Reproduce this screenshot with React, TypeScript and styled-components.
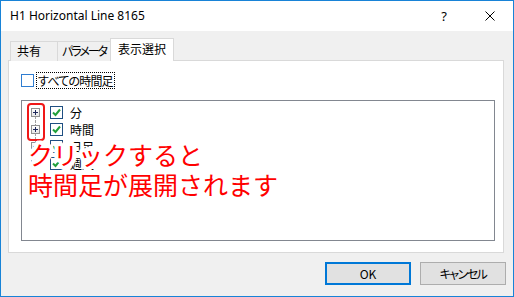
import React from "react";
import styled, { createGlobalStyle } from "styled-components";

const Global = createGlobalStyle`
  html, body { margin: 0; padding: 0; background: #fff; }
  body { font-family: "Noto Sans CJK JP", "Noto Sans", sans-serif; }
`;

const UI_FONT = `"Noto Sans CJK JP", "Noto Sans", sans-serif`;

const HALO = (() => {
  const parts: string[] = [];
  for (const r of [2, 4]) {
    for (let a = 0; a < 16; a++) {
      const t = (a / 16) * Math.PI * 2;
      parts.push(`${(Math.cos(t) * r).toFixed(2)}px ${(Math.sin(t) * r).toFixed(2)}px 0 #fff`);
    }
  }
  return parts.join(", ");
})();

const Window = styled.div`
  width: 514px;
  height: 297px;
  box-sizing: border-box;
  border: 1px solid #1883d7;
  background: #f0f0f0;
  display: flex;
  flex-direction: column;
`;

const TitleBar = styled.div`
  height: 30px;
  flex: none;
  background: #fff;
  display: flex;
  align-items: center;
  padding-left: 9px;
`;

const TitleText = styled.div`
  flex: 1;
  font-family: "Noto Sans", sans-serif;
  font-size: 12px;
  color: #000;
  line-height: 16px;
`;

const CaptionButton = styled.div`
  width: 46px;
  height: 30px;
  display: flex;
  align-items: center;
  justify-content: center;
  font-family: "Noto Sans", sans-serif;
  font-size: 13px;
  color: #000;
`;

const Body = styled.div`
  flex: 1;
  display: flex;
  flex-direction: column;
  padding: 8px 9px 0 7px;
`;

const TabStrip = styled.div`
  height: 22px;
  display: flex;
  align-items: flex-end;
  padding-left: 2px;
  position: relative;
  z-index: 1;
  margin-bottom: -1px;
`;

const Tab = styled.div<{ $selected?: boolean; $width: number; $pad: number; $squeeze?: number }>`
  box-sizing: border-box;
  width: ${(p) => p.$width}px;
  height: ${(p) => (p.$selected ? 23 : 20)}px;
  margin-left: -1px;
  &:first-child { margin-left: 0; }
  border: 1px solid #d9d9d9;
  border-bottom: none;
  background: ${(p) => (p.$selected ? "#fff" : "#f0f0f0")};
  padding-left: ${(p) => p.$pad}px;
  padding-top: ${(p) => (p.$selected ? 2 : 1)}px;
  font-family: ${UI_FONT};
  font-feature-settings: "palt";
  font-size: 12px;
  letter-spacing: ${(p) => p.$squeeze ?? 0}px;
  line-height: 16px;
  color: #000;
  white-space: nowrap;
  overflow: hidden;
`;

const Panel = styled.div`
  box-sizing: border-box;
  height: 193px;
  border: 1px solid #d9d9d9;
  background: #fff;
  padding: 11px 8px 11px 12px;
  display: flex;
  flex-direction: column;
`;

const CheckRow = styled.div`
  display: flex;
  align-items: center;
  height: 17px;
`;

const Box = styled.span<{ $color: string }>`
  box-sizing: border-box;
  width: 13px;
  height: 13px;
  flex: none;
  border: 1px solid ${(p) => p.$color};
  background: #fff;
  display: flex;
  align-items: center;
  justify-content: center;
`;

const FocusLabel = styled.span`
  margin-left: 2px;
  height: 17px;
  box-sizing: border-box;
  border: 1px dotted #000;
  padding: 0 1px 0 1px;
  font-family: ${UI_FONT};
  font-feature-settings: "palt";
  font-size: 12px;
  letter-spacing: -0.8px;
  line-height: 15px;
  color: #000;
  white-space: nowrap;
`;

const ListBox = styled.div`
  position: relative;
  margin-top: 11px;
  box-sizing: border-box;
  height: 141px;
  border: 1px solid #828790;
  background: #fff;
  padding: 3px 0 0 9px;
`;

const TreeRow = styled.div`
  height: 17px;
  display: flex;
  align-items: center;
`;

const Expander = styled.span<{ $first?: boolean; $last?: boolean }>`
  position: relative;
  width: 9px;
  height: 9px;
  flex: none;
  box-sizing: border-box;
  border: 1px solid #919191;
  background: linear-gradient(#ffffff, #e6e6e6);
  display: flex;
  align-items: center;
  justify-content: center;
  margin-right: 10px;
  &::before {
    content: "";
    display: ${(p) => (p.$first ? "none" : "block")};
    position: absolute;
    left: 3px;
    top: -5px;
    height: 4px;
    border-left: 1px dotted #a0a0a0;
  }
  &::after {
    content: "";
    display: ${(p) => (p.$last ? "none" : "block")};
    position: absolute;
    left: 3px;
    bottom: -5px;
    height: 4px;
    border-left: 1px dotted #a0a0a0;
  }
`;

const NodeLabel = styled.span`
  margin-left: 7px;
  font-family: ${UI_FONT};
  font-size: 12px;
  line-height: 16px;
  color: #000;
`;

const Highlight = styled.div`
  position: absolute;
  left: 5px;
  top: 2px;
  width: 18px;
  height: 38px;
  box-sizing: border-box;
  border: 2px solid #f01818;
  border-radius: 4px;
`;

const Annotation = styled.div`
  position: absolute;
  left: 6px;
  top: 38px;
  font-family: "Noto Sans CJK JP", sans-serif;
  font-size: 25px;
  line-height: 30px;
  color: #ff0000;
  white-space: nowrap;
  text-shadow: ${HALO};
`;

const ButtonRow = styled.div`
  display: flex;
  justify-content: flex-end;
  gap: 9px;
  margin: 9px -2px 0 0;
`;

const Button = styled.div<{ $default?: boolean; $squeeze?: number }>`
  box-sizing: border-box;
  width: 86px;
  height: 23px;
  background: #e1e1e1;
  border: ${(p) => (p.$default ? "2px solid #0078d7" : "1px solid #adadad")};
  display: flex;
  align-items: center;
  justify-content: center;
  font-family: ${UI_FONT};
  font-feature-settings: "palt";
  font-size: 12px;
  letter-spacing: ${(p) => p.$squeeze ?? 0}px;
  color: #000;
`;

const Check = () => (
  <svg width="9" height="9" viewBox="0 0 9 9">
    <polyline points="1,4.5 3.5,7 8,1.5" fill="none" stroke="#21a03a" strokeWidth="2" />
  </svg>
);

const Plus = () => (
  <svg width="7" height="7" viewBox="0 0 7 7">
    <rect x="1" y="3" width="5" height="1" fill="#1f2a5c" />
    <rect x="3" y="1" width="1" height="5" fill="#1f2a5c" />
  </svg>
);

const nodes = ["分", "時間", "日足", "週足"];

export default function App() {
  return (
    <>
      <Global />
      <Window>
        <TitleBar>
          <TitleText>H1 Horizontal Line 8165</TitleText>
          <CaptionButton>?</CaptionButton>
          <CaptionButton>
            <svg width="10" height="10" viewBox="0 0 10 10">
              <path d="M0.5 0.5 L9.5 9.5 M9.5 0.5 L0.5 9.5" stroke="#000" strokeWidth="1" />
            </svg>
          </CaptionButton>
        </TitleBar>
        <Body>
          <TabStrip>
            <Tab $width={48} $pad={6}>共有</Tab>
            <Tab $width={54} $pad={4} $squeeze={-2}>パラメータ</Tab>
            <Tab $selected $width={64} $pad={7}>表示選択</Tab>
          </TabStrip>
          <Panel>
            <CheckRow>
              <Box $color="#2f7dd1" />
              <FocusLabel>すべての時間足</FocusLabel>
            </CheckRow>
            <ListBox>
              {nodes.map((n, i) => (
                <TreeRow key={n}>
                  <Expander $first={i === 0} $last={i === nodes.length - 1}>
                    <Plus />
                  </Expander>
                  <Box $color="#1f4f82">
                    <Check />
                  </Box>
                  <NodeLabel>{n}</NodeLabel>
                </TreeRow>
              ))}
              <Highlight />
              <Annotation>
                クリックすると
                <br />
                時間足が展開されます
              </Annotation>
            </ListBox>
          </Panel>
          <ButtonRow>
            <Button $default>OK</Button>
            <Button $squeeze={-1.5}>キャンセル</Button>
          </ButtonRow>
        </Body>
      </Window>
    </>
  );
}
